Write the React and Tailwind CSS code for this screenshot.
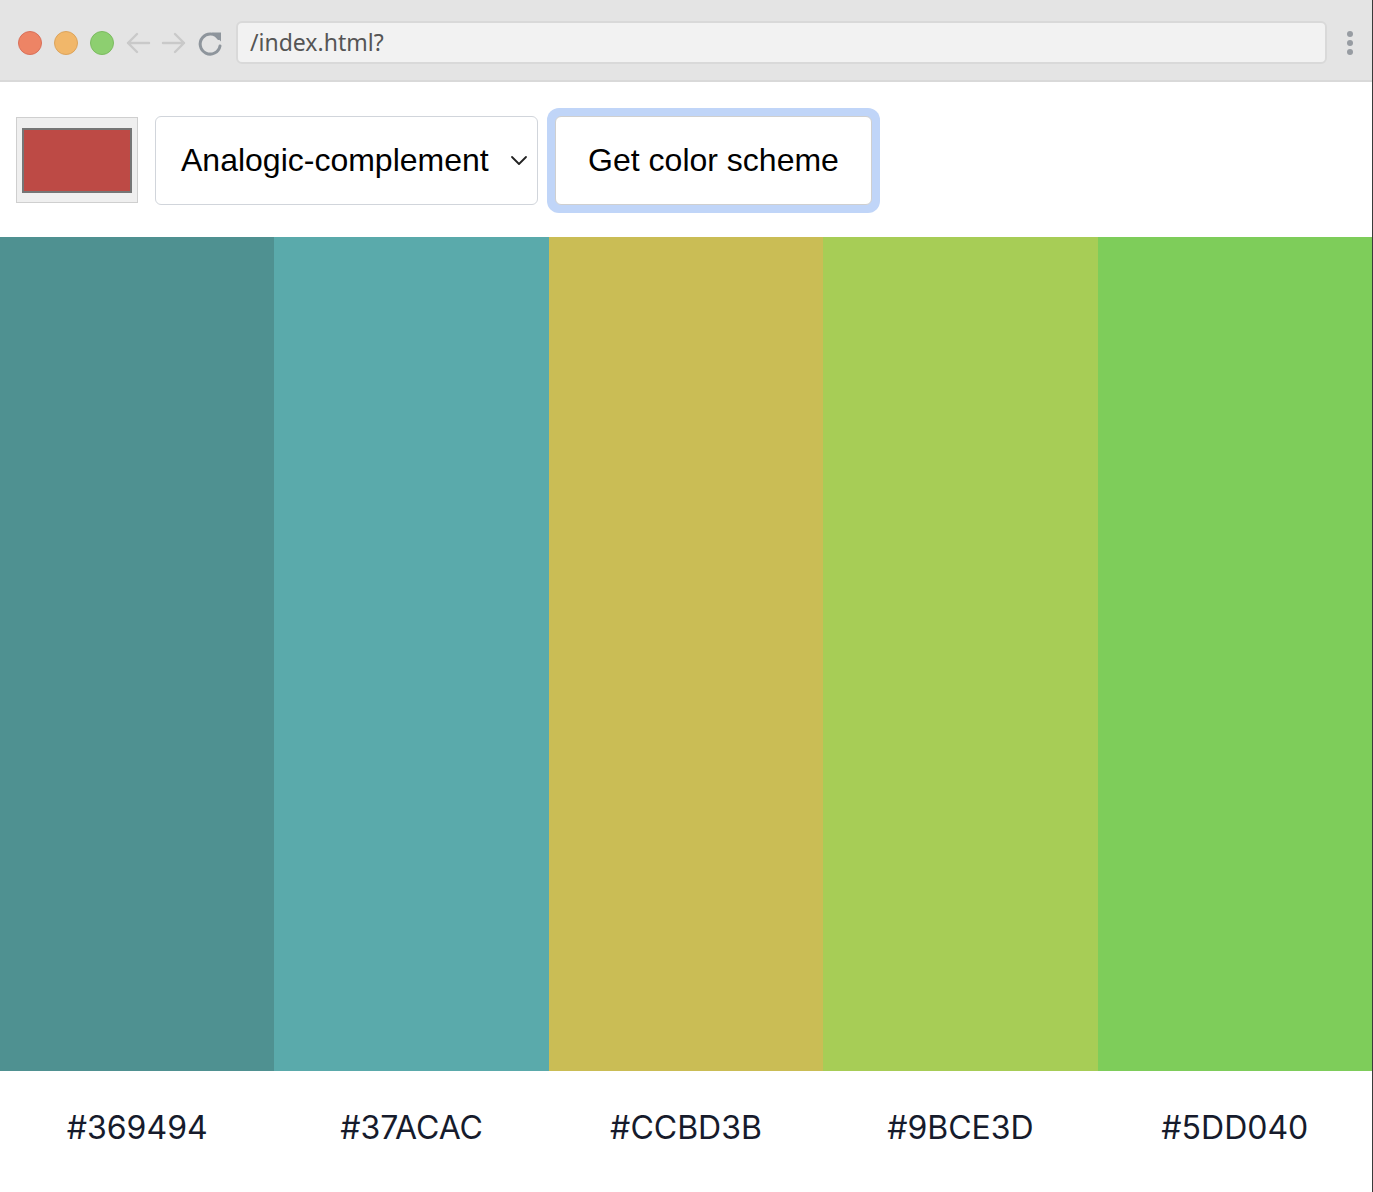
import React from "react";

const cols = [
  { bg: "bg-[#4f9191]", label: "#369494" },
  { bg: "bg-[#5aaaab]", label: "#37ACAC" },
  { bg: "bg-[#cabd55]", label: "#CCBD3B" },
  { bg: "bg-[#a7cd56]", label: "#9BCE3D" },
  { bg: "bg-[#7ecd5a]", label: "#5DD040" },
];

export default function App() {
  return (
    <div className="w-[1373px] h-[1192px] flex flex-col bg-white border-r border-[#3a3a3a] overflow-hidden" style={{ fontFamily: '"Liberation Sans", Arial, sans-serif' }}>
      {/* Browser chrome */}
      <div className="h-[82px] shrink-0 bg-[#e4e4e4] border-b-2 border-[#d9d9d9] flex items-center pl-[18px] pr-[16px] pt-[5px]">
        <div className="flex items-center gap-[12px]">
          <span className="w-[24px] h-[24px] rounded-full bg-[#ed8465] border border-[#d9705a]" />
          <span className="w-[24px] h-[24px] rounded-full bg-[#f1b76a] border border-[#dca45c]" />
          <span className="w-[24px] h-[24px] rounded-full bg-[#8dcf70] border border-[#7cbc61]" />
        </div>
        <div className="flex items-center ml-[6px]">
          <svg width="36" height="30" viewBox="0 0 36 30" fill="none" stroke="#c9c9c9" strokeWidth="2.4" strokeLinecap="round" strokeLinejoin="round">
            <path d="M29 15H8M17 6l-9 9 9 9" />
          </svg>
          <svg width="36" height="30" viewBox="0 0 36 30" fill="none" stroke="#c9c9c9" strokeWidth="2.4" strokeLinecap="round" strokeLinejoin="round">
            <path d="M7 15h21M19 6l9 9-9 9" />
          </svg>
          <svg width="36" height="30" viewBox="0 0 36 30" fill="none" className="ml-[1px]">
            <path d="M25.5 10.5A10 10 0 1 0 27 18" stroke="#8e959c" strokeWidth="3" strokeLinecap="round" />
            <path d="M19 4.5h9v9z" fill="#8e959c" />
          </svg>
        </div>
        <div className="ml-[7px] w-[1091px] h-[43px] rounded-[6px] bg-[#f2f2f2] border-2 border-[#d9d9d9] flex items-center pl-[12px] text-[23px] text-[#555]" style={{ fontFamily: '"Noto Sans", "Liberation Sans", sans-serif' }}>
          /index.html?
        </div>
        <div className="ml-auto mr-[3px] flex flex-col gap-[3px] items-center">
          <span className="w-[6px] h-[6px] rounded-full bg-[#979ca2]" />
          <span className="w-[6px] h-[6px] rounded-full bg-[#979ca2]" />
          <span className="w-[6px] h-[6px] rounded-full bg-[#979ca2]" />
        </div>
      </div>

      {/* Controls */}
      <div className="h-[155px] shrink-0 flex items-center pl-[16px] pt-[1px]">
        <div className="w-[122px] h-[86px] bg-[#efefef] border border-[#cfcfcf] flex items-center justify-center">
          <div className="w-[110px] h-[65px] bg-[#bd4a45] border-2 border-[#767676]" />
        </div>
        <div className="ml-[17px] w-[383px] h-[89px] rounded-[6px] border border-[#d1d5db] bg-white flex items-center pl-[25px] pr-[9px] text-[32px] text-black">
          <span>Analogic-complement</span>
          <svg className="ml-auto" width="18" height="12" viewBox="0 0 18 12" fill="none" stroke="#222" strokeWidth="1.8" strokeLinecap="round" strokeLinejoin="round">
            <path d="M2 3l7 7 7-7" />
          </svg>
        </div>
        <div className="ml-[9px] w-[333px] h-[105px] rounded-[12px] bg-[#c0d5f8] p-[8px]">
          <div className="w-full h-full rounded-[6px] bg-white border border-[#cfcfcf] flex items-center justify-center text-[32px] text-black">
            Get color scheme
          </div>
        </div>
      </div>

      {/* Color columns */}
      <div className="h-[834px] shrink-0 grid grid-cols-5">
        {cols.map((c) => (
          <div key={c.label} className={c.bg} />
        ))}
      </div>

      {/* Labels */}
      <div className="flex-1 grid grid-cols-5 text-[#161b2c] text-[32px]" style={{ fontFamily: 'Inter, "Liberation Sans", sans-serif' }}>
        {cols.map((c) => (
          <div key={c.label} className="flex items-center justify-center pb-[8px]">
            {c.label}
          </div>
        ))}
      </div>
    </div>
  );
}
